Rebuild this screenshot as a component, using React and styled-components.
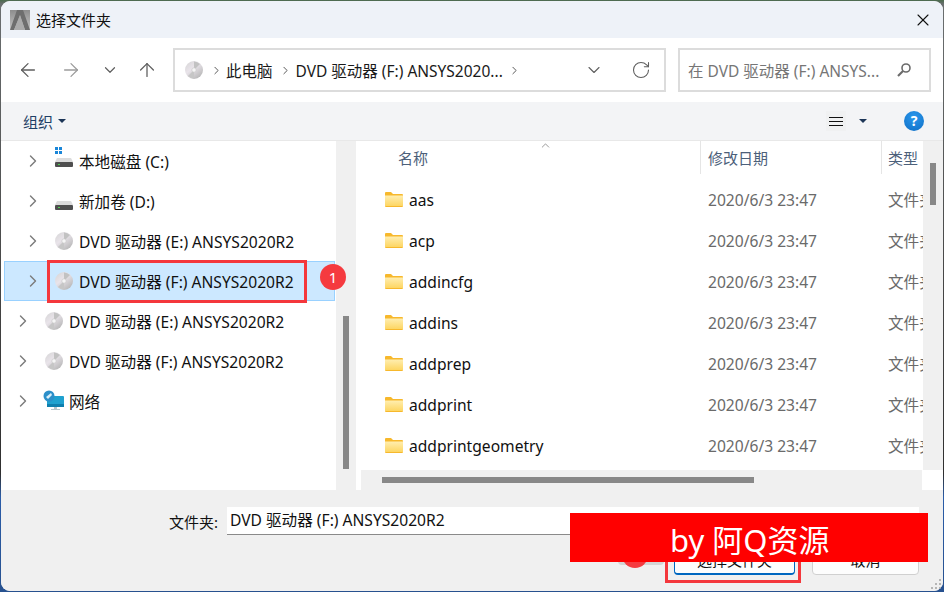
import React from 'react';
import styled, { createGlobalStyle } from 'styled-components';
import { ArrowLeft, ArrowRight, ArrowUp, ChevronDown, ChevronRight, ChevronUp, RotateCw, X } from 'lucide-react';

const Global = createGlobalStyle`
  html, body { margin: 0; padding: 0; }
  body {
    width: 944px;
    height: 592px;
    overflow: hidden;
    background: linear-gradient(180deg, #4a6b4c 0, #6b6f70 4px, #444 50%, #2f2f2f 80%, #2a5ca8 84%, #27518f 100%);
    font-family: "Noto Sans", "Noto Sans CJK SC", sans-serif;
  }
`;

const Window = styled.div`
  position: relative;
  box-sizing: border-box;
  width: 942px;
  height: 590px;
  margin: 1px;
  border-radius: 9px;
  overflow: hidden;
  display: flex;
  flex-direction: column;
  background: #f0f0f0;
`;

const TitleBar = styled.div`
  height: 37px;
  display: flex;
  align-items: center;
  padding: 0 9px 0 9px;
  background: #eef2f8;
  font-size: 15px;
  color: #111;
`;
const TitleText = styled.span`
  margin-left: 6px;
  flex: 1;
`;

const NavBar = styled.div`
  height: 64px;
  display: flex;
  align-items: center;
  padding-left: 6px;
  background: #fff;
`;
const NavButton = styled.div`
  width: ${p => p.$w}px;
  display: flex;
  justify-content: center;
  color: ${p => p.$dim ? '#9c9c9c' : '#5f5f5f'};
`;
const Field = styled.div`
  box-sizing: border-box;
  height: 44px;
  width: ${p => p.$w}px;
  margin-left: ${p => p.$ml}px;
  border: 2px solid #dcdcdc;
  display: flex;
  align-items: center;
  font-size: 15.5px;
  color: #1a1a1a;
  white-space: nowrap;
`;
const CrumbIcon = styled.span`
  display: flex;
  margin-left: 10px;
`;
const CrumbArrow = styled.span`
  display: flex;
  margin: 0 ${p => p.$mr || 4}px 0 ${p => p.$ml || 4}px;
  color: #555;
`;
const Spacer = styled.div`
  flex: 1;
`;
const SearchHint = styled.span`
  flex: 1;
  margin-left: 8px;
  color: #767676;
`;
const SearchGap = styled.div`
  width: 17px;
`;

const ToolBar = styled.div`
  height: 39px;
  display: flex;
  align-items: center;
  padding-left: 22px;
  background: #f3f4f6;
  border-bottom: 1px solid #e8e8e8;
  box-sizing: border-box;
  font-size: 15px;
  color: #1f3f66;
`;
const Caret = styled.i`
  width: 0;
  height: 0;
  margin-left: ${p => p.$ml}px;
  border-left: 4px solid transparent;
  border-right: 4px solid transparent;
  border-top: 4px solid #1c3557;
`;
const ViewBtn = styled.div`
  width: 20px;
  height: 20px;
  margin-left: auto;
  background: #f0f1f2;
  display: flex;
  flex-direction: column;
  justify-content: center;
  gap: 3px;
  align-items: center;
`;
const ViewLine = styled.i`
  width: 14px;
  height: 1px;
  background: #111;
`;
const Help = styled.div`
  width: 20px;
  height: 20px;
  margin: 0 19px 0 37px;
  border-radius: 50%;
  background: radial-gradient(circle at 50% 30%, #2a97ec, #0f6fc6);
  color: #fff;
  font-size: 14px;
  font-weight: 700;
  line-height: 20px;
  text-align: center;
`;

const Main = styled.div`
  height: 349px;
  display: flex;
`;

const Tree = styled.div`
  width: 335px;
  background: #fff;
  box-sizing: border-box;
`;
const TreeRow = styled.div`
  box-sizing: border-box;
  height: 40px;
  margin: 0 1px 0 3px;
  padding-left: ${p => p.$level * 10 + 12}px;
  display: flex;
  align-items: center;
  font-size: 15.6px;
  color: #111;
  white-space: nowrap;
  border: 1px solid ${p => p.$selected ? '#99d1ff' : 'transparent'};
  background: ${p => p.$selected ? '#cce8ff' : 'transparent'};
`;
const Expander = styled.span`
  width: 12px;
  display: flex;
  justify-content: center;
  color: #7c7c7c;
  margin-right: 16px;

  svg {
    flex: none;
  }
`;
const TreeLabel = styled.span`
  margin-left: 6px;
`;
const IconSlot = styled.span`
  display: flex;
  margin: ${p => p.$wide ? '0 -2px 0 -2px' : '0'};
`;

const VTrack = styled.div`
  width: 20px;
  flex: none;
  background: #f0f0f0;
  display: flex;
  justify-content: center;
`;
const VThumb = styled.div`
  width: 6px;
  height: ${p => p.$h}px;
  margin-top: ${p => p.$top}px;
  background: #888;
`;

const Pane = styled.div`
  flex: 1;
  display: flex;
  flex-direction: column;
  background: #fff;
  min-width: 0;
`;
const PaneBody = styled.div`
  height: 329px;
  display: flex;
`;
const List = styled.div`
  position: relative;
  flex: 1;
  min-width: 0;
  overflow: hidden;
`;
const Head = styled.div`
  height: 33px;
  margin-bottom: 5px;
  display: flex;
  font-size: 15px;
  color: #4c607a;
`;
const HeadCell = styled.div`
  box-sizing: border-box;
  width: ${p => p.$w}px;
  flex: none;
  padding-left: ${p => p.$pl}px;
  line-height: 34px;
  border-right: ${p => p.$line ? '1px solid #e5e5e5' : 'none'};
`;
const SortMark = styled.span`
  position: absolute;
  left: 183px;
  top: -2px;
  color: #666;
  display: flex;
`;
const FileRow = styled.div`
  height: 41px;
  display: flex;
  align-items: center;
  font-size: 15.6px;
  white-space: nowrap;
`;
const NameCell = styled.div`
  box-sizing: border-box;
  width: 344px;
  flex: none;
  padding-left: 29px;
  display: flex;
  align-items: center;
  gap: 6px;
  color: #111;
`;
const DateCell = styled.div`
  width: 188px;
  flex: none;
  padding-left: 8px;
  box-sizing: border-box;
  color: #6a6a6a;
`;
const TypeCell = styled.div`
  flex: none;
  color: #6a6a6a;
`;

const HBar = styled.div`
  height: 20px;
  display: flex;
  padding-left: 5px;
`;
const HTrack = styled.div`
  width: 561px;
  background: #f0f0f0;
  display: flex;
  align-items: center;
  padding-left: 21px;
  box-sizing: border-box;
`;
const HThumb = styled.div`
  width: 372px;
  height: 6px;
  background: #888;
`;

const Footer = styled.div`
  flex: 1;
  background: #f0f0f0;
  padding: 17px 24px 0 0;
  display: flex;
  flex-direction: column;
`;
const FieldRow = styled.div`
  display: flex;
  align-items: center;
  justify-content: flex-end;
  font-size: 15px;
  color: #111;
`;
const FolderInput = styled.div`
  box-sizing: border-box;
  width: 692px;
  height: 28px;
  margin-left: 9px;
  padding: 0 0 3px 3px;
  background: #fff;
  border-bottom: 1px solid #8a8a8a;
  display: flex;
  align-items: center;
  font-size: 15.6px;
`;
const ButtonRow = styled.div`
  display: flex;
  justify-content: flex-end;
  gap: 17px;
  margin-top: 10px;
`;
const Button = styled.div`
  box-sizing: border-box;
  width: ${p => p.$w}px;
  height: 30px;
  border-radius: 4px;
  background: #fdfdfd;
  border: 1px solid ${p => p.$primary ? '#0067c0' : '#d0d0d0'};
  border-bottom-width: ${p => p.$primary ? 2 : 1}px;
  font-size: 15px;
  color: #111;
  text-align: center;
  line-height: 28px;
`;

// annotations pasted over the dialog
const Outline = styled.div`
  position: absolute;
  box-sizing: border-box;
  left: ${p => p.$x}px;
  top: ${p => p.$y}px;
  width: ${p => p.$w}px;
  height: ${p => p.$h}px;
  border: 3px solid #f4373c;
`;
const Badge = styled.div`
  position: absolute;
  left: ${p => p.$x}px;
  top: ${p => p.$y}px;
  width: 26px;
  height: 26px;
  border-radius: 50%;
  background: #f53a3f;
  color: #fff;
  font-size: 15px;
  line-height: 26px;
  text-align: center;
`;
const Ghost = styled.div`
  position: absolute;
  left: 617px;
  top: 556px;
  width: 46px;
  height: 8px;
  border-radius: 4px;
  background: #d4d4d4;
`;
const Banner = styled.div`
  position: absolute;
  left: 569px;
  top: 512px;
  width: 358px;
  height: 49px;
  background: #f00;
  color: #fff;
  font-size: 31px;
  line-height: 54px;
  padding-left: 100px;
  box-sizing: border-box;
  white-space: nowrap;
`;
const Grip = styled.div`
  position: absolute;
  right: 2px;
  bottom: 2px;
  display: grid;
  grid-template-columns: repeat(3, 2px);
  gap: 2px;
`;
const GripDot = styled.i`
  width: 2px;
  height: 2px;
  background: ${p => p.$on ? '#b5b5b5' : 'transparent'};
`;

const Disc = () => (
  <svg width="18" height="18" viewBox="0 0 18 18">
    <defs>
      <linearGradient id="discFill" x1="0" y1="0" x2="0.8" y2="1">
        <stop offset="0" stopColor="#d4d4d4" />
        <stop offset="0.45" stopColor="#e9e4ea" />
        <stop offset="1" stopColor="#b4b4b4" />
      </linearGradient>
    </defs>
    <circle cx="9" cy="9" r="9" fill="url(#discFill)" />
    <path d="M9 9 L3 15 A8.5 8.5 0 0 0 9 17.5 Z" fill="#c6c6c6" />
    <path d="M9 9 L15 3 A8.5 8.5 0 0 0 9 0.5 Z" fill="#c2c2c2" />
    <circle cx="9" cy="9" r="2.2" fill="#f5f5f5" stroke="#c4c4c4" strokeWidth="0.6" />
  </svg>
);

const Drive = ({ win }) => (
  <svg width="18" height="22" viewBox="0 0 18 22" style={{ marginTop: win ? -6 : 0 }}>
    {win && (
      <g fill="#1a86d8">
        <rect x="0" y="0" width="3" height="3" />
        <rect x="4" y="0" width="3" height="3" />
        <rect x="0" y="4" width="3" height="3" />
        <rect x="4" y="4" width="3" height="3" />
      </g>
    )}
    <path d="M2 11 L16 11 L18 15 L0 15 Z" fill="#dcdcdc" />
    <rect x="0" y="15" width="18" height="5" rx="1" fill="#4f4f4f" />
    <rect x="3" y="17" width="2" height="1" fill="#4fd14f" />
  </svg>
);

const Network = () => (
  <svg width="22" height="22" viewBox="0 0 22 22">
    <rect x="4" y="6" width="17" height="11" rx="1" fill="#1fa1cf" />
    <rect x="4" y="14" width="17" height="3" fill="#0f7fae" />
    <rect x="11" y="17" width="3" height="2" fill="#b9c6cc" />
    <rect x="8" y="19" width="9" height="1" fill="#b9c6cc" />
    <circle cx="6" cy="6" r="5.5" fill="#2c8fc9" />
    <path d="M3 7 L8 3 L9 5 L5 9 Z" fill="#d8eef8" />
  </svg>
);

const Folder = () => (
  <svg width="18" height="15" viewBox="0 0 18 15">
    <defs>
      <linearGradient id="folderFill" x1="0" y1="0" x2="0" y2="1">
        <stop offset="0" stopColor="#ffeeb0" />
        <stop offset="1" stopColor="#fdd663" />
      </linearGradient>
    </defs>
    <path d="M0 1 Q0 0 1 0 L6 0 L8 2 L17 2 Q18 2 18 3 L18 14 Q18 15 17 15 L1 15 Q0 15 0 14 Z" fill="#f7b82c" />
    <rect x="0" y="3.5" width="18" height="10.5" fill="url(#folderFill)" />
  </svg>
);

const AppLogo = () => (
  <svg width="20" height="20" viewBox="0 0 20 20">
    <defs>
      <linearGradient id="logoBack" x1="0" y1="0" x2="0" y2="1">
        <stop offset="0" stopColor="#8d8d8d" />
        <stop offset="1" stopColor="#c4c4c4" />
      </linearGradient>
    </defs>
    <rect width="20" height="20" fill="url(#logoBack)" />
    <path d="M7 0 L13 0 L20 20 L15 20 L10 5 L4 20 L0 20 Z" fill="#6e6e6e" />
    <path d="M10 5 L15 20 L4 20 Z" fill="#ababab" />
  </svg>
);

const SearchIcon = () => (
  <svg width="16" height="16" viewBox="0 0 16 16" fill="none" stroke="#6b6b6b">
    <circle cx="10" cy="6" r="4" strokeWidth="1.6" />
    <path d="M7 9 L2 14" strokeWidth="2.2" />
  </svg>
);

const treeItems = [
  { level: 1, label: '本地磁盘 (C:)', icon: <Drive win /> },
  { level: 1, label: '新加卷 (D:)', icon: <Drive /> },
  { level: 1, label: 'DVD 驱动器 (E:) ANSYS2020R2', icon: <Disc /> },
  { level: 1, label: 'DVD 驱动器 (F:) ANSYS2020R2', icon: <Disc />, selected: true },
  { level: 0, label: 'DVD 驱动器 (E:) ANSYS2020R2', icon: <Disc /> },
  { level: 0, label: 'DVD 驱动器 (F:) ANSYS2020R2', icon: <Disc /> },
  { level: 0, label: '网络', icon: <Network />, wide: true },
];

const files = ['aas', 'acp', 'addincfg', 'addins', 'addprep', 'addprint', 'addprintgeometry'];

const gripCells = [0, 0, 1, 0, 1, 1, 1, 1, 1];

const App = () => (
  <>
    <Global />
    <Window>
      <TitleBar>
        <AppLogo />
        <TitleText>选择文件夹</TitleText>
        <X size={20} strokeWidth={1.3} color="#111" style={{ marginRight: 1 }} />
      </TitleBar>

      <NavBar>
        <NavButton $w={42}><ArrowLeft size={22} strokeWidth={1.4} /></NavButton>
        <NavButton $w={44} $dim><ArrowRight size={22} strokeWidth={1.4} /></NavButton>
        <NavButton $w={34}><ChevronDown size={18} strokeWidth={1.6} /></NavButton>
        <NavButton $w={40}><ArrowUp size={22} strokeWidth={1.4} /></NavButton>
        <Field $w={493} $ml={6}>
          <CrumbIcon><Disc /></CrumbIcon>
          <CrumbArrow $ml={7} $mr={3}><ChevronRight size={13} strokeWidth={1.8} /></CrumbArrow>
          <span>此电脑</span>
          <CrumbArrow $ml={6} $mr={4}><ChevronRight size={13} strokeWidth={1.8} /></CrumbArrow>
          <span>DVD 驱动器 (F:) ANSYS2020...</span>
          <CrumbArrow $ml={5}><ChevronRight size={13} strokeWidth={1.8} /></CrumbArrow>
          <Spacer />
          <ChevronDown size={20} strokeWidth={1.3} color="#5f5f5f" />
          <RotateCw size={20} strokeWidth={1.3} color="#5f5f5f" style={{ margin: '0 13px 0 27px' }} />
        </Field>
        <Field $w={253} $ml={12}>
          <SearchHint>在 DVD 驱动器 (F:) ANSYS...</SearchHint>
          <SearchIcon />
          <SearchGap />
        </Field>
      </NavBar>

      <ToolBar>
        组织
        <Caret $ml={5} />
        <ViewBtn><ViewLine /><ViewLine /><ViewLine /></ViewBtn>
        <Caret $ml={13} />
        <Help>?</Help>
      </ToolBar>

      <Main>
        <Tree>
          {treeItems.map((item, i) => (
            <TreeRow key={i} $level={item.level} $selected={item.selected}>
              <Expander><ChevronRight size={20} strokeWidth={1.7} /></Expander>
              <IconSlot $wide={item.wide}>{item.icon}</IconSlot>
              <TreeLabel>{item.label}</TreeLabel>
            </TreeRow>
          ))}
        </Tree>
        <VTrack><VThumb $top={175} $h={153} /></VTrack>
        <Pane>
          <PaneBody>
            <List>
              <Head>
                <HeadCell $w={345} $pl={42} $line>名称</HeadCell>
                <SortMark><ChevronUp size={13} strokeWidth={1.2} /></SortMark>
                <HeadCell $w={181} $pl={7} $line>修改日期</HeadCell>
                <HeadCell $w={41} $pl={6}>类型</HeadCell>
              </Head>
              {files.map(name => (
                <FileRow key={name}>
                  <NameCell><Folder />{name}</NameCell>
                  <DateCell>2020/6/3 23:47</DateCell>
                  <TypeCell>文件夹</TypeCell>
                </FileRow>
              ))}
            </List>
            <VTrack><VThumb $top={22} $h={42} /></VTrack>
          </PaneBody>
          <HBar>
            <HTrack><HThumb /></HTrack>
          </HBar>
        </Pane>
      </Main>

      <Footer>
        <FieldRow>
          文件夹:
          <FolderInput>DVD 驱动器 (F:) ANSYS2020R2</FolderInput>
        </FieldRow>
        <ButtonRow>
          <Button $w={121} $primary>选择文件夹</Button>
          <Button $w={107}>取消</Button>
        </ButtonRow>
      </Footer>

      <Outline $x={46} $y={259} $w={260} $h={43} />
      <Badge $x={319} $y={263}>1</Badge>
      <Ghost />
      <Badge $x={621} $y={541} />
      <Outline $x={664} $y={535} $w={136} $h={47} />
      <Banner>by 阿Q资源</Banner>
      <Grip>
        {gripCells.map((on, i) => <GripDot key={i} $on={on} />)}
      </Grip>
    </Window>
  </>
);

export default App;
